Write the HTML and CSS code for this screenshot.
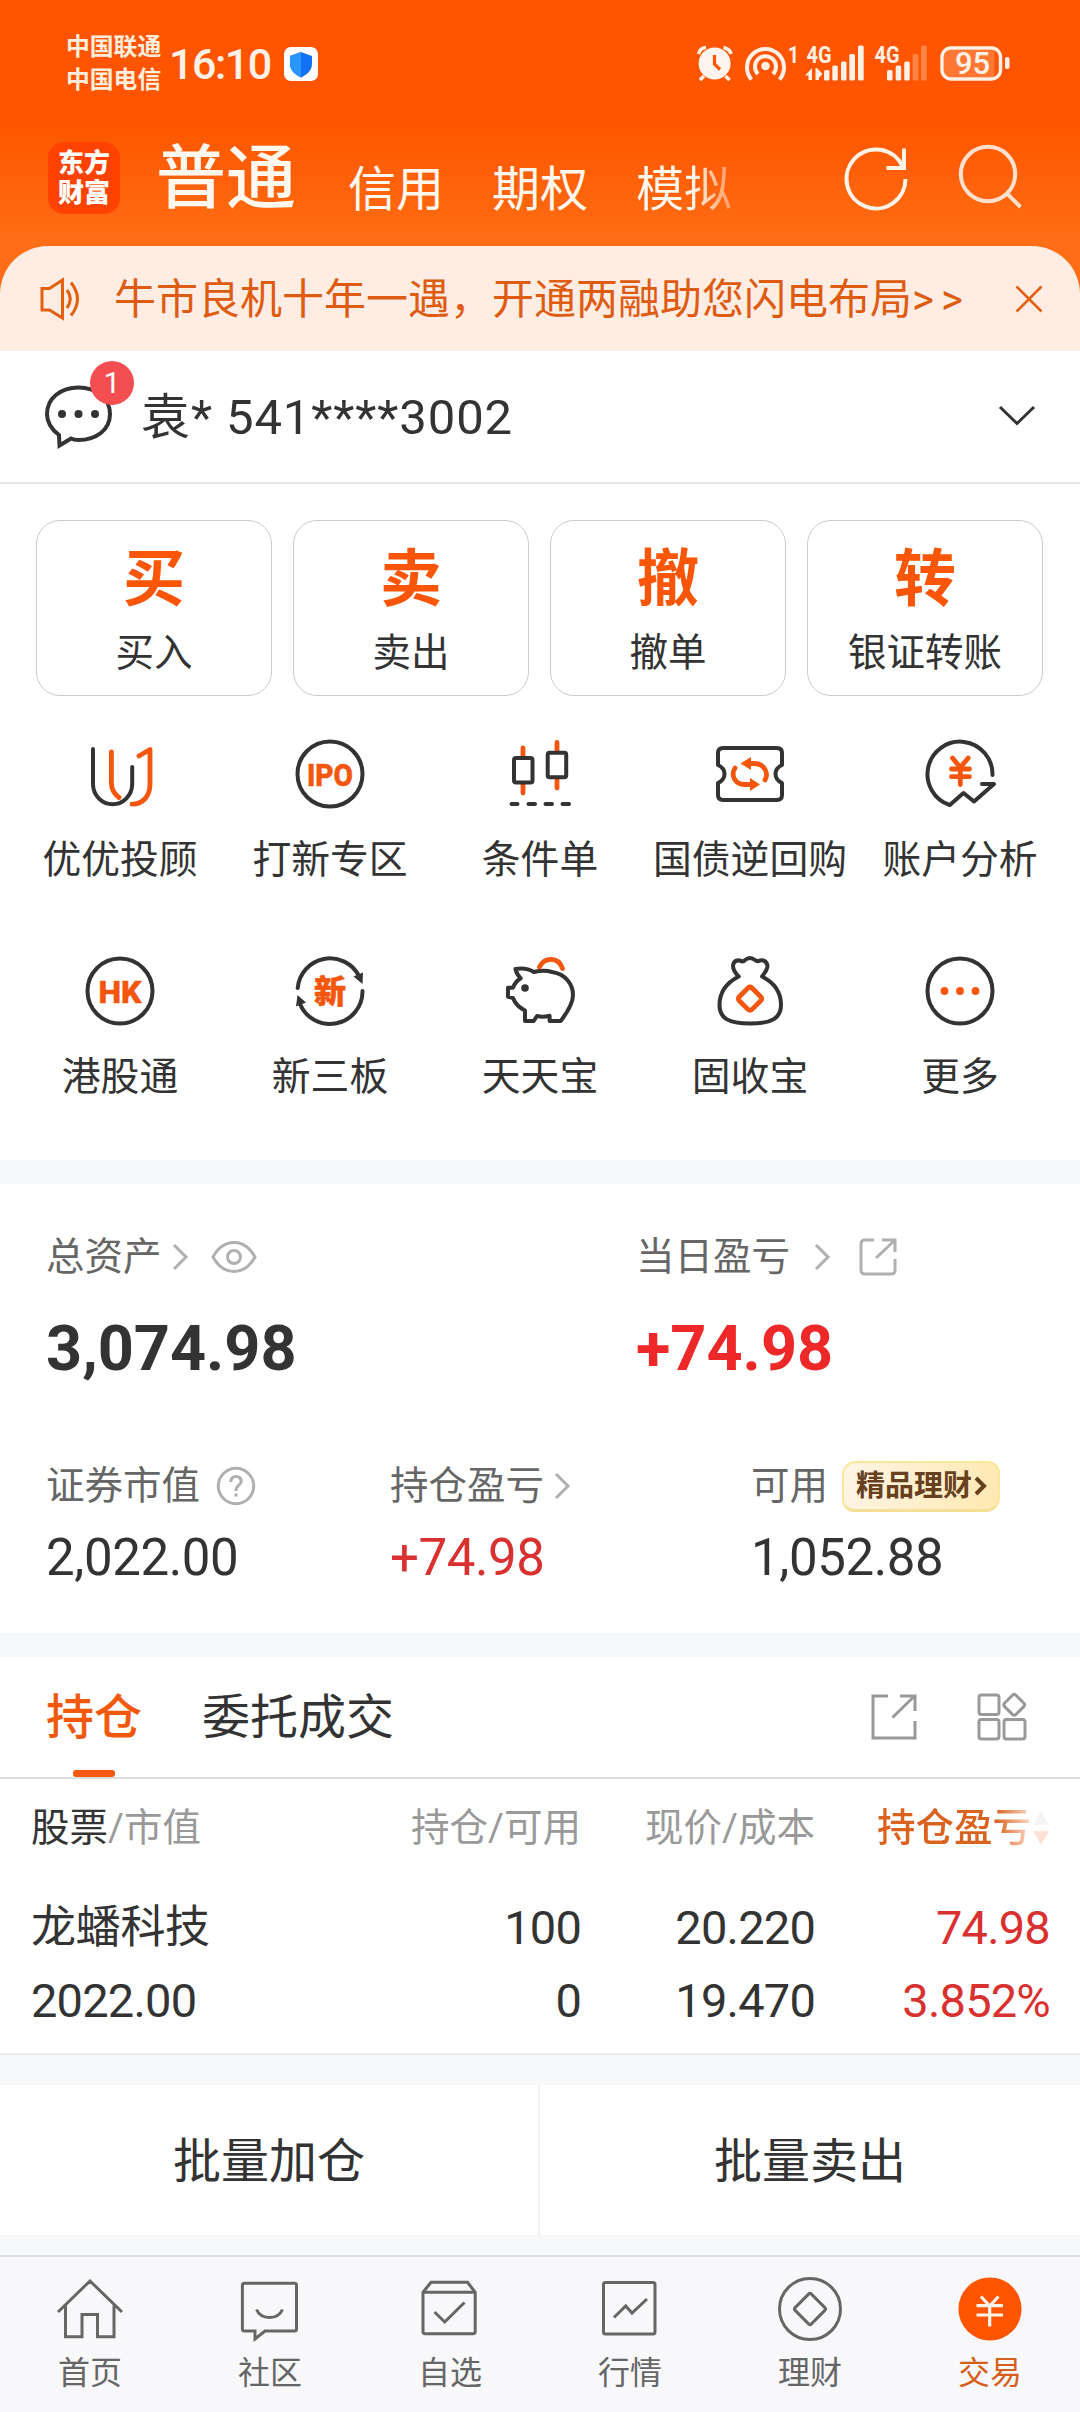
FILE: index.html
```html
<!DOCTYPE html>
<html lang="zh-CN">
<head>
<meta charset="utf-8">
<title>交易</title>
<link rel="stylesheet" href="styles.css">
</head>
<body>
<header class="top">
  <div class="status">
    <div class="carriers"><span>中国联通</span><span>中国电信</span></div>
    <span class="clock">16:10</span>
    <svg class="shield" width="34" height="34" viewBox="0 0 34 34"><rect width="34" height="34" rx="7" fill="#fff"/><path d="M17 5L28 9V17C28 24 22 28 17 30.5C12 28 6 24 6 17V9Z" fill="#1172f5"/><path d="M17 5V30.5C12 28 6 24 6 17V9Z" fill="#2b96fb"/></svg>
    <svg class="status-icons" width="324" height="48" viewBox="0 0 324 48" fill="none" stroke="#fff1e6" font-family="Roboto" font-weight="700">
      <circle cx="24.6" cy="23.5" r="16" fill="#fff4ee" stroke="none"/><path d="M8.500 14Q10 8 16 7.500M33.500 7.500Q40 9 41 14M14 36L10 40M35.500 36L39.500 40" stroke-width="3.600"/><path d="M24.500 15V24L30 29.500" stroke="#ff5500" stroke-width="3.200"/>
      <circle cx="75.500" cy="26" r="4.300" fill="#fff1e6" stroke="none"/><path d="M68 34A10.500 10.500 0 1 1 83 34M61.500 39.500A18.500 18.500 0 1 1 89.500 39.500" stroke-width="4"/>
      <g fill="#fff1e6" stroke="none"><text x="98" y="23" font-size="24" textLength="11" lengthAdjust="spacingAndGlyphs">1</text><text x="116.500" y="23" font-size="24" textLength="25" lengthAdjust="spacingAndGlyphs">4G</text><text x="184.500" y="23" font-size="24" textLength="25" lengthAdjust="spacingAndGlyphs">4G</text>
      <path d="M122 28V40H118.500V35.500H115ZM125.500 40V28H127L132.500 34L129 38V40Z"/>
      <rect x="134" y="30" width="5.500" height="10.500" rx="1.500"/><rect x="142.300" y="25.500" width="5.500" height="15" rx="1.500"/><rect x="151" y="21.500" width="5.500" height="19" rx="1.500"/><rect x="159.300" y="14" width="5.700" height="26.500" rx="1.500"/><rect x="168" y="5.500" width="5.700" height="35" rx="1.500"/>
      <rect x="197" y="30" width="5.500" height="10.500" rx="1.500"/><rect x="205.700" y="25.500" width="5.500" height="15" rx="1.500"/><rect x="214.200" y="21.500" width="5.500" height="19" rx="1.500"/><g opacity=".3"><rect x="222.600" y="14" width="5.700" height="26.500" rx="1.500"/><rect x="231" y="5.500" width="5.700" height="35" rx="1.500"/></g>
      <path d="M258 10H304.500V37H258Q254 37 254 31V16Q254 10 258 10Z" opacity=".22"/><rect x="315" y="17" width="4.500" height="12" rx="2"/><text x="265" y="34" font-size="31" font-weight="500" textLength="35">95</text></g>
      <rect x="252" y="8" width="58.500" height="31" rx="9" stroke-width="3.400"/>
    </svg>
  </div>
  <nav class="modes">
    <div class="logo"><span>东方</span><span>财富</span></div>
    <a class="mode mode-on">普通</a><a class="mode">信用</a><a class="mode">期权</a><a class="mode mode-fade">模拟</a>
    <svg class="refresh" width="72" height="72" viewBox="0 0 72 72" fill="none" stroke="#fff3e8" stroke-width="4"><path d="M64.500 37A29.500 29.500 0 1 1 61.500 24M63 6.500V26H45.500"/></svg>
    <svg width="72" height="72" viewBox="0 0 72 72" fill="none" stroke="#ffe0cc" stroke-width="4"><circle cx="32" cy="32" r="27.200"/><path d="M51 51.500L64.500 65"/></svg>
  </nav>
</header>
<main>
  <section class="notice">
    <svg class="speaker" width="48" height="48" viewBox="0 0 48 48" fill="none" stroke="#e2600f" stroke-width="3"><path d="M4 13.500H11.500L24.500 5V43L11.500 35H4ZM29 15Q35.500 24 29 33M33 7.500Q46 24 33 40.500"/></svg>
    <p>牛市良机十年一遇，开通两融助您闪电布局<span class="more-sign">&gt;&gt;</span></p>
    <svg width="30" height="30" viewBox="0 0 30 30" fill="none" stroke="#e2600f" stroke-width="2.600"><path d="M2.500 2.500L27.500 27.500M27.500 2.500L2.500 27.500"/></svg>
  </section>
  <section class="account">
    <div class="chat">
      <svg width="72" height="72" viewBox="0 0 72 72" fill="none" stroke="#333" stroke-width="4"><path d="M16 57C8 51 4 43 4 36C4 20 18 9.500 35.500 9.500S67 20 67 36S53 62 35.500 62Q31 62 28 60.500L16.500 67.500Z"/><g fill="#333" stroke="none"><circle cx="19" cy="36" r="4"/><circle cx="35.500" cy="36" r="4"/><circle cx="52" cy="36" r="4"/></g></svg>
      <span class="badge">1</span>
    </div>
    <span class="name">袁* 541****3002</span>
    <svg class="chevron" width="40" height="24" viewBox="0 0 40 24" fill="none" stroke="#333" stroke-width="3"><path d="M3 3L20 19.500L37 3"/></svg>
  </section>
  <section class="actions">
    <a class="action"><b>买</b><span>买入</span></a>
    <a class="action"><b>卖</b><span>卖出</span></a>
    <a class="action"><b>撤</b><span>撤单</span></a>
    <a class="action"><b>转</b><span>银证转账</span></a>
  </section>
  <section class="tools">
    <a class="tool"><svg viewBox="0 0 72 72"><path d="M9 11V46A19.600 20.200 0 0 0 48.200 46V29"/><path class="o" d="M27.400 14V45Q27.500 54 35 59.500M55 18L66 11.500V46C66 59 58 66.200 48 66.200"/></svg><span>优优投顾</span></a>
    <a class="tool"><svg viewBox="0 0 72 72"><circle cx="36" cy="36" r="32.500"/><text x="13" y="47.500" font-size="32" textLength="46" lengthAdjust="spacingAndGlyphs">IPO</text></svg><span>打新专区</span></a>
    <a class="tool"><svg viewBox="0 0 72 72"><path class="o" d="M19 10V18M19 46V55M53 4.500V13M53 40V50"/><rect x="10" y="20" width="18.500" height="24.500" rx="2"/><rect x="43.700" y="14.700" width="18.500" height="24.500" rx="2"/><path d="M7.500 66H13.500M24.500 66H31M41.500 66H48M58.500 66H65"/></svg><span>条件单</span></a>
    <a class="tool"><svg viewBox="0 0 72 72"><path d="M9 10H63Q68 10 68 15V27Q61.500 30 61.500 36T68 45V57Q68 62 63 62H9Q4 62 4 57V45Q10.500 42 10.500 36T4 27V15Q4 10 9 10Z"/><path class="o" stroke-width="5" d="M35 25.500H41C50.500 26 55 35 51 42M21 30C16 38 22 46.500 30 46.500H37"/><path class="of" d="M26.500 25.500L37 19V32ZM46 46.500L36 40V53Z"/></svg><span>国债逆回购</span></a>
    <a class="tool"><svg viewBox="0 0 72 72"><path d="M68.500 37A32.500 32.500 0 1 0 25.800 67L39.500 55L50 63.500L70 46H58"/><path class="o" d="M28.500 20L36.300 29.500L44.200 20M36.300 29.500V46.500M27.500 31H45.500M27.500 38.700H45.500"/></svg><span>账户分析</span></a>
    <a class="tool"><svg viewBox="0 0 72 72"><circle cx="36" cy="36" r="32.500"/><text x="14.500" y="47.500" font-size="32" textLength="43" lengthAdjust="spacingAndGlyphs">HK</text></svg><span>港股通</span></a>
    <a class="tool"><svg viewBox="0 0 72 72"><path d="M3.700 33A32.500 32.500 0 0 1 65 21M68.500 36A32.500 32.500 0 0 1 6 49"/><path class="df" d="M59.500 21.500L69 17.500L68.500 29ZM3.500 40L12 47.500L2 51.500Z"/><text x="20" y="48" font-size="32">新</text></svg><span>新三板</span></a>
    <a class="tool"><svg viewBox="0 0 72 72"><path d="M11.500 14Q22 12 30 17Q40 14.500 48 17C62 19 69 30 69 40Q69 50 56.700 66H45.600V60.700Q39 62.500 33 61L29.700 66H21V55.500Q12 51 9 43L4 41.700V32.700H9Q11 27 16.700 23.300Q12.500 19 11.500 14Z"/><circle class="df" cx="21" cy="33" r="3.800"/><path class="o" d="M35.500 12C40 2.500 54 .5 58.500 13.500"/></svg><span>天天宝</span></a>
    <a class="tool"><svg viewBox="0 0 72 72"><path d="M24.700 21.500Q19 16 19 10.500Q20 4.500 26 5.500Q29 7.500 31 5Q36 1 41 5Q43.500 7 46 5.500Q52 4.500 53.500 10.500Q53.500 15 48 21.500C61 28 67 37 67 50C67 63 58 68.500 36 68.500S5.500 63 5.500 50C5.500 37 12 28 24.700 21.500Z"/><rect class="o" x="27" y="34.700" width="18" height="18" rx="2.500" transform="rotate(45 36 43.700)"/></svg><span>固收宝</span></a>
    <a class="tool"><svg viewBox="0 0 72 72"><circle cx="36" cy="36" r="32.500"/><g class="of"><circle cx="20.500" cy="36" r="3.900"/><circle cx="36" cy="36" r="3.900"/><circle cx="51.500" cy="36" r="3.900"/></g></svg><span>更多</span></a>
  </section>
  <section class="assets">
    <div class="totals">
      <div class="stat">
        <div class="label">总资产<svg class="arrow" viewBox="0 0 16 28"><path d="M2 2L14 14L2 26"/></svg><svg class="eye" width="46" height="34" viewBox="0 0 46 34"><path d="M2 17Q10 2.500 23 2.500T44 17Q36 31.500 23 31.500T2 17Z"/><circle cx="23" cy="17" r="6.500"/></svg></div>
        <strong>3,074.98</strong>
      </div>
      <div class="stat">
        <div class="label">当日盈亏<svg class="arrow arrow-far" viewBox="0 0 16 28"><path d="M2 2L14 14L2 26"/></svg><svg class="share" width="40" height="40" viewBox="0 0 40 40"><path d="M16 3H7Q3 3 3 7V33Q3 37 7 37H33Q37 37 37 33V22M18 21L36 4M24 3H37V15"/></svg></div>
        <strong class="rise">+74.98</strong>
      </div>
    </div>
    <div class="parts">
      <div class="stat">
        <div class="label">证券市值<svg class="help" width="40" height="40" viewBox="0 0 40 40"><circle cx="20" cy="20" r="17.700"/><path d="M14.800 16Q15 10.500 20 10.500T25.200 15.500C25.200 19 20 19.500 20 24V25M20 27.500V30.500"/></svg></div>
        <span class="value">2,022.00</span>
      </div>
      <div class="stat">
        <div class="label">持仓盈亏<svg class="arrow" viewBox="0 0 16 28"><path d="M2 2L14 14L2 26"/></svg></div>
        <span class="value rise-soft">+74.98</span>
      </div>
      <div class="stat">
        <div class="label">可用<span class="promo">精品理财<svg width="14" height="22" viewBox="0 0 14 22"><path d="M3 3L11 11L3 19"/></svg></span></div>
        <span class="value">1,052.88</span>
      </div>
    </div>
  </section>
  <section class="holdings">
    <div class="tabs">
      <a class="tab tab-on">持仓</a><a class="tab">委托成交</a>
      <svg class="tab-share" width="48" height="48" viewBox="0 0 48 48"><path d="M18 3H3V45H45V28M22.500 24.500L43.500 4M30 3H45V18"/></svg>
      <svg width="52" height="50" viewBox="0 0 52 50"><rect x="3" y="3" width="20" height="19.500" rx="2.500"/><rect x="3" y="27.500" width="20" height="19.500" rx="2.500"/><rect x="28" y="27.500" width="21" height="19.500" rx="2.500"/><rect x="30.200" y="4.800" width="16" height="16" rx="2.500" transform="rotate(45 38.200 12.800)"/></svg>
    </div>
    <div class="grid heads">
      <span><em>股票</em>/市值</span><span>持仓/可用</span><span>现价/成本</span>
      <span class="sorted">持仓盈亏<svg class="sort" width="18" height="36" viewBox="0 0 18 36"><path d="M9 1L17 15H1Z" fill="#f4f4f6"/><path d="M9 35L17 21H1Z" fill="#fde1d4"/></svg></span>
    </div>
    <div class="grid holding">
      <span class="stock">龙蟠科技</span><span>100</span><span>20.220</span><span class="rise-soft">74.98</span>
      <span>2022.00</span><span>0</span><span>19.470</span><span class="rise-soft">3.852%</span>
    </div>
  </section>
  <section class="batch"><a>批量加仓</a><a>批量卖出</a></section>
</main>
<nav class="bottom">
  <a><svg viewBox="0 0 72 72"><path d="M4 39L36 8L68 39M11.500 32.500V63.700H28V41.500H43.500V63.700H60V32.500"/></svg><span>首页</span></a>
  <a><svg viewBox="0 0 72 72"><path d="M10.500 10.300H60.500Q62.500 10.300 62.500 12.500V56Q62.500 58 60.500 58H31L21 66V58H10.500Q8.400 58 8.400 56V12.500Q8.400 10.300 10.500 10.300ZM22.500 36.500Q26 44.500 35.500 44.500T48.500 36.500"/></svg><span>社区</span></a>
  <a><svg viewBox="0 0 72 72"><path d="M9 19.300L17 9.300H53.500L61.200 19.300V58.500Q61.200 60.800 59 60.800H11Q9 60.800 9 58.500ZM9 19.300H61M20.500 39L30.700 49L50.500 29.500"/></svg><span>自选</span></a>
  <a><svg viewBox="0 0 72 72"><rect x="9.500" y="9.500" width="51.500" height="51.500" rx="2"/><path d="M20 44.500L31.700 33L38 40L53 26"/></svg><span>行情</span></a>
  <a><svg viewBox="0 0 72 72"><circle cx="36" cy="36" r="30.500"/><rect x="24.500" y="24.500" width="23" height="23" rx="2" transform="rotate(45 36 36)"/></svg><span>理财</span></a>
  <a class="on"><svg viewBox="0 0 72 72"><circle cx="36" cy="36" r="31.600" fill="#ff5500" stroke="none"/><path stroke="#fff3e8" stroke-width="3.200" d="M27 23.500L35.700 33L44.500 23.500M35.700 33V53.500M22.500 32.700H49M22.500 42H49"/></svg><span>交易</span></a>
</nav>
</body>
</html>
```
FILE: styles.css
```css
* { box-sizing: border-box; }
body {
  margin: 0;
  width: 1080px;
  height: 2412px;
  overflow: hidden;
  display: flex;
  flex-direction: column;
  background: #f7f8fa;
  color: #333;
  font-family: Roboto, "Noto Sans CJK SC", sans-serif;
}
svg { display: block; flex: none; overflow: visible; }
p { margin: 0; }

/* header */
.top {
  height: 294px;
  background: linear-gradient(#ff5500 0, #ff5500 120px, #ff6d14 240px, #ff6d14);
  color: #fff8ee;
}
.status { height: 128px; display: flex; align-items: flex-start; padding: 30px 0 0 66px; }
.carriers { display: flex; flex-direction: column; font-size: 23.800px; line-height: 33px; font-weight: 700; color: #ffeede; width: 103px; padding-top: 1px; }
.clock { font-size: 43px; line-height: 66px; font-weight: 500; width: 115px; letter-spacing: -1.500px; color: #fff1e6; padding-top: 1px; }
.shield { margin-top: 17px; }
.status-icons { margin: 10px 0 0 372px; }
.modes { height: 100px; display: flex; align-items: center; padding-left: 48px; }
.logo {
  width: 72px; height: 72px; border-radius: 16px; background: #ff4200; margin-right: 36px;
  display: flex; flex-direction: column; align-items: center; justify-content: center;
  font-size: 26px; line-height: 30px; font-weight: 900; color: #fff;
}
.mode { font-size: 48px; line-height: 60px; padding-top: 23px; margin-right: 48px; white-space: nowrap; }
.mode-on { font-size: 70px; line-height: 80px; padding: 2px 0 0; font-weight: 500; margin-right: 52px; }
.mode-fade {
  margin-right: 109px;
  background: linear-gradient(90deg, #fff8ee 58%, rgba(255, 248, 238, .35) 100%);
  -webkit-background-clip: text; background-clip: text; color: transparent;
}
.refresh { margin-right: 43px; }

/* notice */
main { margin-top: -48px; flex: none; }
.notice {
  height: 105px; border-radius: 48px 48px 0 0; background: #ffede4;
  display: flex; align-items: center; padding: 0 36px 0 38px; color: #de5b12;
}
.notice p { margin-left: 28px; font-size: 42px; line-height: 60px; padding-top: 2px; flex: 1; white-space: nowrap; }
.more-sign { letter-spacing: 7px; }

/* account */
.account { height: 133px; background: #fff; border-bottom: 2px solid #e6e6e6; display: flex; align-items: center; padding: 0 43px; }
.chat { position: relative; margin-top: -6px; }
.badge {
  position: absolute; left: 47px; top: -17px; width: 44px; height: 44px; border-radius: 50%;
  background: #f54e50; color: #fff; font-size: 30px; line-height: 44px; text-align: center;
}
.name { flex: 1; margin-left: 26px; padding-top: 2px; font-size: 49px; line-height: 60px; letter-spacing: .9px; }
.chevron { margin-top: -2px; }

/* main actions */
.actions { height: 212px; background: #fff; display: grid; grid-template-columns: repeat(4, 236px); gap: 21px; padding: 36px 36px 0; }
.action { height: 176px; border: 1.500px solid #ccc; border-radius: 24px; display: flex; flex-direction: column; align-items: center; }
.action b { font-size: 62px; line-height: 72px; margin-top: 23px; font-weight: 700; color: #fb5607; }
.action span { font-size: 38.500px; line-height: 50px; margin-top: 12px; }

/* tool grid */
.tools { height: 464px; background: #fff; display: grid; grid-template-columns: repeat(5, 210px); grid-auto-rows: 217px; padding: 42px 15px 0; }
.tool { display: flex; flex-direction: column; align-items: center; font-size: 38.800px; line-height: 50px; white-space: nowrap; }
.tool svg { width: 72px; height: 72px; margin-bottom: 25px; fill: none; stroke: #333; stroke-width: 4; stroke-linecap: round; stroke-linejoin: round; }
.tool .o { stroke: #f5560e; stroke-width: 4.800; }
.tool .of { fill: #fa560a; stroke: none; }
.tool .df { fill: #333; stroke: none; }
.tool text { fill: #f5560e; stroke: #f5560e; stroke-width: .6; font-weight: 800; }

/* assets */
.assets { height: 449px; margin-top: 24px; background: #fff; }
.totals { display: grid; grid-template-columns: 590px 1fr; padding: 43px 0 0 46px; height: 272px; }
.parts { display: grid; grid-template-columns: 344px 361px 1fr; padding-left: 46px; }
.stat { display: flex; flex-direction: column; }
.label { display: flex; align-items: center; height: 60px; font-size: 38.500px; line-height: 60px; color: #666; }
.label svg { fill: none; stroke: #b0b0b0; stroke-width: 3; }
.label .arrow { width: 16px; height: 28px; margin-left: 10px; }
.label .arrow-far { margin-left: 24px; }
.eye { margin-left: 23px; }
.share { margin-left: 28px; }
.help { margin-left: 16px; }
.stat strong { font-size: 63px; line-height: 80px; letter-spacing: 0; margin-top: 22px; }
.value { font-size: 51px; line-height: 60px; margin-top: 12px; letter-spacing: -.4px; }
.stat .rise { color: #ee2828; }
.rise-soft { color: #d93030; }
.promo {
  display: flex; align-items: center; gap: 1px; height: 51px; width: 158px; margin-left: 14px; padding-left: 12px;
  font-size: 29px; font-weight: 700; color: #67401f; border-radius: 14px 12px 14px 12px;
  background: linear-gradient(100deg, #fff5e6, #ffe8b0); border: 2px solid #fbe79a; border-bottom: 3px solid #f5de96; white-space: nowrap;
}
.label .promo svg { stroke: #67401f; stroke-width: 4; }

/* holdings */
.holdings { height: 398px; margin-top: 24px; background: #fff; border-bottom: 2px solid #ebebeb; }
.tabs { height: 122px; border-bottom: 2px solid #ddd; display: flex; align-items: center; padding: 0 52px 0 46px; }
.tab { font-size: 48px; line-height: 119px; height: 120px; padding-top: 1px; margin-right: 60px; }
.tab-on { color: #f2590d; display: flex; flex-direction: column; align-items: center; font-weight: 500; }
.tab-on::after { content: ""; width: 42px; height: 7px; border-radius: 3px; background: #f2590d; margin-top: -7px; flex: none; }
.tabs svg { fill: none; stroke: #999; stroke-width: 3; }
.tab-share { margin-left: auto; margin-right: 58px; }
.grid { display: grid; grid-template-columns: 250px 300px 234px 235px; padding: 0 0 0 31px; text-align: right; }
.heads { height: 97px; line-height: 97px; font-size: 38.500px; color: #999; }
.heads em { font-style: normal; color: #333; }
.grid > span:nth-child(4n+1) { text-align: left; }
.heads .sorted { display: flex; align-items: center; justify-content: flex-end; white-space: nowrap; background: linear-gradient(90deg, #d9631f 77%, #fbd3c0 91%); -webkit-background-clip: text; background-clip: text; color: transparent; font-weight: 500; }
.sort { margin-left: 1px; }
.holding { font-size: 47px; line-height: 73px; padding-top: 15px; letter-spacing: -.8px; }
.stock { font-size: 45px; letter-spacing: -.3px; }

/* batch buttons */
.batch { height: 150px; margin-top: 30px; background: #fff; display: grid; grid-template-columns: 540px 540px; }
.batch a { font-size: 48px; line-height: 153px; text-align: center; }
.batch a:first-child { border-right: 2px solid #f2f2f4; }

/* bottom bar */
.bottom { height: 157px; margin-top: auto; flex: none; background: #f8f8fb; border-top: 2px solid #e0e0e2; display: grid; grid-template-columns: repeat(6, 1fr); color: #666; }
.bottom a { display: flex; flex-direction: column; align-items: center; padding-top: 16px; font-size: 32px; line-height: 40px; }
.bottom svg { width: 72px; height: 72px; margin-bottom: 8px; fill: none; stroke: #666; stroke-width: 3; }
.bottom .on { color: #d65f1c; }
```
